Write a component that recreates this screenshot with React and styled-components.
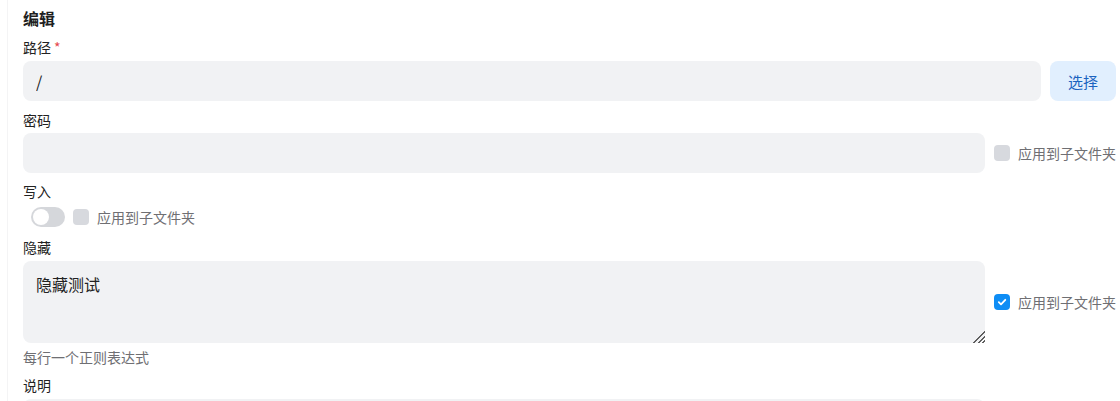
import React from "react";
import styled, { createGlobalStyle } from "styled-components";

const Global = createGlobalStyle`
  html, body { margin: 0; padding: 0; background: #fff; }
  body { font-family: "Noto Sans CJK SC", "Noto Sans", sans-serif; color: #222; }
  * { box-sizing: border-box; }
`;

const Card = styled.div`
  margin-left: 7px;
  border-left: 1px solid #f4f4f5;
  padding: 8px 4px 0 15px;
  height: 401px;
  overflow: hidden;
`;

const Title = styled.h2`
  margin: 0 0 9px;
  font-size: 16px;
  line-height: 20px;
  font-weight: 700;
  color: #1f1f1f;
`;

const Field = styled.div`
  display: flex;
  flex-direction: column;
  margin-bottom: ${(p) => p.$mb ?? 9}px;
`;

const Label = styled.label`
  font-size: 14px;
  line-height: 20px;
  color: #222;
  margin-bottom: ${(p) => p.$mb ?? 4}px;
`;

const Star = styled.span`
  color: #e5484d;
  margin-left: 3px;
`;

const Row = styled.div`
  display: flex;
  align-items: center;
  gap: 9px;
`;

const Input = styled.input`
  flex: ${(p) => (p.$w ? `0 0 ${p.$w}px` : "1")};
  min-width: 0;
  height: 40px;
  border: none;
  outline: none;
  border-radius: 8px;
  background: #f1f2f4;
  padding: 0 13px;
  font-family: inherit;
  font-size: 16px;
  color: #222;
`;

const TextArea = styled.textarea`
  flex: 1;
  min-width: 0;
  height: 82px;
  border: none;
  outline: none;
  border-radius: 8px;
  background: #f1f2f4;
  padding: 11px 13px;
  font-family: inherit;
  font-size: 16px;
  line-height: 24px;
  color: #222;
  resize: vertical;
  &::-webkit-resizer {
    background:
      linear-gradient(135deg, #f1f2f4 0 48%, transparent 48%),
      repeating-linear-gradient(135deg, transparent 0 2px, #5f5f5f 2px 3.4px);
  }
`;

const Button = styled.button`
  width: 66px;
  height: 40px;
  border: none;
  border-radius: 8px;
  background: #e1effe;
  color: #1b63c0;
  font-family: inherit;
  font-size: 15px;
  cursor: pointer;
`;

const CheckWrap = styled.label`
  display: flex;
  align-items: center;
  gap: 8px;
  width: ${(p) => (p.$fixed ? "122px" : "auto")};
  font-size: 14px;
  color: #6f6f73;
  white-space: nowrap;
`;

const Box = styled.span`
  width: 16px;
  height: 16px;
  border-radius: 4px;
  background: ${(p) => (p.$checked ? "#0e8df5" : "#d7d9de")};
  display: inline-flex;
  align-items: center;
  justify-content: center;
`;

const ToggleRow = styled.div`
  display: flex;
  align-items: center;
  gap: 8px;
  padding-left: 8px;
  height: 20px;
`;

const Toggle = styled.span`
  position: relative;
  width: 34px;
  height: 20px;
  border-radius: 10px;
  background: #d5d7db;
  display: inline-block;
  &::after {
    content: "";
    position: absolute;
    left: 2px;
    top: 2px;
    width: 16px;
    height: 16px;
    border-radius: 50%;
    background: #fff;
  }
`;

const Hint = styled.div`
  font-size: 14px;
  line-height: 20px;
  color: #6f6f73;
  margin-top: 4px;
`;

function Check({ checked, label, fixed }) {
  return (
    <CheckWrap $fixed={fixed}>
      <Box $checked={checked}>
        {checked && (
          <svg width="10" height="10" viewBox="0 0 10 10">
            <path d="M1.8 5.2 L4 7.3 L8.3 2.8" stroke="#fff" strokeWidth="1.8" fill="none" strokeLinecap="round" strokeLinejoin="round" />
          </svg>
        )}
      </Box>
      {label}
    </CheckWrap>
  );
}

export default function App() {
  return (
    <>
      <Global />
      <Card>
        <Title>编辑</Title>
        <Field>
          <Label>
            路径<Star>*</Star>
          </Label>
          <Row>
            <Input defaultValue="/" />
            <Button>选择</Button>
          </Row>
        </Field>
        <Field $mb={8}>
          <Label $mb={3}>密码</Label>
          <Row>
            <Input type="text" />
            <Check label="应用到子文件夹" fixed />
          </Row>
        </Field>
        <Field $mb={10}>
          <Label $mb={6}>写入</Label>
          <ToggleRow>
            <Toggle />
            <Check label="应用到子文件夹" />
          </ToggleRow>
        </Field>
        <Field $mb={8}>
          <Label>隐藏</Label>
          <Row>
            <TextArea defaultValue="隐藏测试" />
            <Check label="应用到子文件夹" checked fixed />
          </Row>
          <Hint>每行一个正则表达式</Hint>
        </Field>
        <Field>
          <Label>说明</Label>
          <Row>
            <Input $w={962} />
          </Row>
        </Field>
      </Card>
    </>
  );
}
